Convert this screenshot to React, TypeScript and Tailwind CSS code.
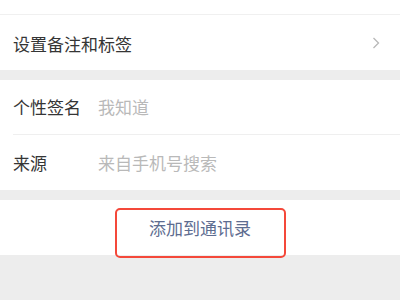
import React from 'react';

const font = { fontFamily: '"Noto Sans CJK SC", "Noto Sans", sans-serif' };

function InfoRow({ label, value, divider }: { label: string; value: string; divider?: boolean }) {
  return (
    <div className="pl-[13px]">
      <div className={`h-[55px] flex items-center ${divider ? 'border-b border-[#efefef]' : ''}`}>
        <span className="w-[85px] shrink-0 text-[17px] text-[#353535]">{label}</span>
        <span className="text-[17px] text-[#b9b9b9]">{value}</span>
      </div>
    </div>
  );
}

export default function App() {
  return (
    <div className="w-[400px] h-[300px] bg-[#ededed] overflow-hidden" style={font}>
      {/* previous row tail */}
      <div className="h-[15px] bg-white border-b border-[#f0f0f0]" />

      {/* remark & tags */}
      <div className="h-[55px] bg-white flex items-center pl-[13px] pr-[20px]">
        <span className="flex-1 text-[17px] text-[#353535] mt-[2px]">设置备注和标签</span>
        <svg width="8" height="12" viewBox="0 0 8 12" fill="none">
          <polyline points="1.5,1 6.5,6 1.5,11" stroke="#b8b8b8" strokeWidth="1.3" />
        </svg>
      </div>

      {/* profile info */}
      <div className="mt-[10px] bg-white">
        <InfoRow label="个性签名" value="我知道" divider />
        <InfoRow label="来源" value="来自手机号搜索" />
      </div>

      {/* action */}
      <div className="relative mt-[10px] h-[55px] bg-white flex items-center justify-center">
        <span className="text-[17px] text-[#5d6c90]">添加到通讯录</span>
        <div className="absolute left-[115px] top-[8px] w-[171px] h-[50px] border-2 border-[#f4483a] rounded-[5px]" />
      </div>
    </div>
  );
}
